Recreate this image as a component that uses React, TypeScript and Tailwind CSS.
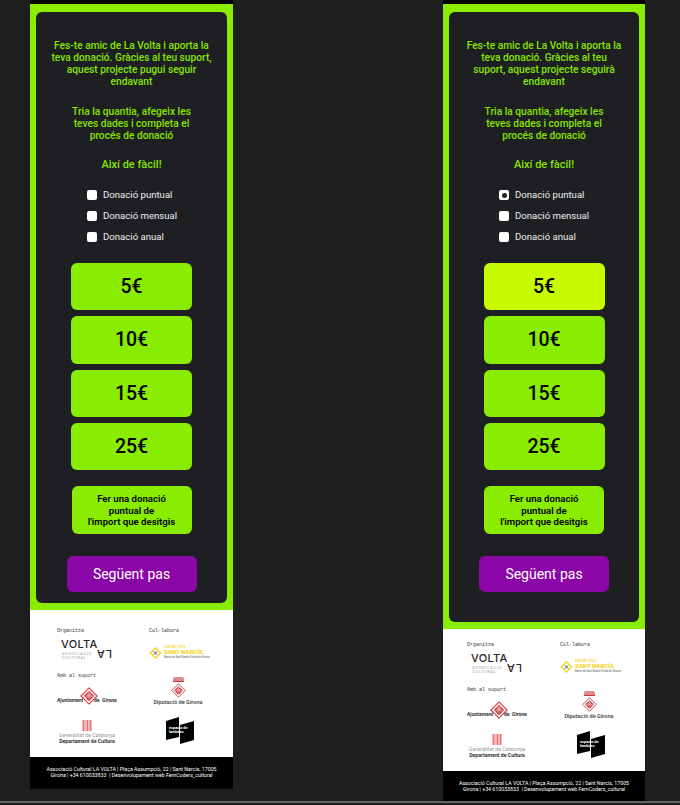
const Shield = ({ className = "" }: { className?: string }) => (
  <svg viewBox="0 0 20 20" className={className}>
    <path d="M10 1 19 10 10 19 1 10Z" fill="#fff" stroke="#c8363c" strokeWidth="1.2" />
    <path d="M10 4 16 10 10 16 4 10Z" fill="#c8363c" />
    <path d="M7 7 13 13M13 7 7 13M10 4V16M4 10H16M7.5 5 15 12.5M12.5 5 5 12.5" stroke="#f5c9c9" strokeWidth=".7" />
  </svg>
);

const VoltaLogo = () => (
  <div className="relative h-[20px] w-[50px]">
    <span className="absolute -top-[0.5px] left-0 font-['Inter',sans-serif] text-[11px] leading-[10px] font-medium tracking-[0.3px] text-[#2a2327]">VOLTA</span>
    <span className="absolute top-[12.5px] left-[1px] text-[4.2px] leading-[4px] tracking-[0.6px] whitespace-nowrap text-[#a29c9e]">
      ASSOCIACIÓ
      <br />
      CULTURAL
    </span>
    <span className="absolute top-[10px] left-[35px] rotate-180 font-['Inter',sans-serif] text-[11px] leading-[9px] font-medium tracking-[1px] text-[#2a2327]">LA</span>
  </div>
);

const NarcisLogo = () => (
  <div className="flex w-[62px] items-center gap-[2px]">
    <svg viewBox="0 0 14 14" className="h-[12px] w-[13px] shrink-0">
      <path d="M7 1 13 7 7 13 1 7Z" fill="none" stroke="#f7d42a" strokeWidth="1.6" />
      <path d="M5 5 9 9M9 5 5 9" stroke="#3b3524" strokeWidth="1" />
    </svg>
    <div className="flex flex-col">
      <span className="text-[2.8px] leading-[3px] font-bold tracking-[0.3px] text-[#f7d42a]">CENTRE CÍVIC</span>
      <span className="text-[6px] leading-[6px] font-black text-[#f7d42a]">SANT NARCÍS</span>
      <span className="mt-[1px] text-[2.7px] leading-[3px] font-medium whitespace-nowrap text-[#777]">Barris de Sant Narcís Fitzbó de Girona</span>
    </div>
  </div>
);

const AjuntamentLogo = () => (
  <div className="relative h-[18px] w-[60px]">
    <Shield className="absolute top-0 left-[23px] h-[18px] w-[18px]" />
    <span className="absolute top-[10px] left-0 text-[5px] leading-[6px] font-bold text-[#333]">Ajuntament</span>
    <span className="absolute top-[10px] left-[37px] text-[5px] leading-[6px] font-bold text-[#333]">de</span>
    <span className="absolute top-[10px] left-[45px] text-[5px] leading-[6px] font-bold text-[#333]">Girona</span>
  </div>
);

const DiputacioLogo = () => (
  <div className="flex w-[52px] flex-col items-center">
    <div className="h-[5px] w-[11px] rounded-t-[2px] border-b border-[#c8363c] bg-[#d98d8d]" />
    <Shield className="mt-[1px] h-[15px] w-[15px]" />
    <span className="mt-[1px] text-[5.6px] leading-[6px] font-semibold whitespace-nowrap text-[#4a4a4a]">Diputació de Girona</span>
  </div>
);

const GeneralitatLogo = () => (
  <div className="flex w-[60px] flex-col items-center pt-[2px]">
    <div className="flex h-[11px] w-[10px] justify-between bg-[#f7b7b7] px-[1px]">
      <i className="w-[1px] bg-[#ef6f72]" />
      <i className="w-[1px] bg-[#ef6f72]" />
      <i className="w-[1px] bg-[#ef6f72]" />
    </div>
    <span className="mt-[1px] text-[5.2px] leading-[6px] whitespace-nowrap text-[#999]">Generalitat de Catalunya</span>
    <span className="text-[5.2px] leading-[6px] font-bold whitespace-nowrap text-[#333]">Departament de Cultura</span>
  </div>
);

const BookLogo = () => (
  <div className="relative h-[27px] w-[28px]">
    <svg viewBox="0 0 28 27" className="h-full w-full">
      <path d="M0 4 13 0V20L0 23Z" fill="#000" />
      <path d="M14 8 28 4V23L14 27Z" fill="#000" />
    </svg>
    <span className="absolute top-[9px] left-[3px] text-[3.8px] leading-[4px] font-bold whitespace-nowrap text-white">
      espacio de
      <br />
      lambdas
    </span>
  </div>
);

type PanelProps = {
  width: string;
  cardH: string;
  footerPad: string;
  gridCols: string;
  selected: boolean;
  ml: string;
  radioPl: string;
  intro: string[];
};

const Panel = ({ width, cardH, footerPad, gridCols, selected, ml, radioPl, intro }: PanelProps) => (
  <div className={`flex shrink-0 flex-col ${width} ${ml}`}>
    <div className="h-[4px] bg-black" />
    <div className="flex flex-col bg-[#8aec00] px-[6px] pt-[8px] pb-[7px]">
      <div className={`flex flex-col items-center rounded-[6px] bg-[#1e1f22] pt-[28px] ${cardH}`}>
        <p className="text-center text-[10.2px] leading-[12px] font-medium whitespace-nowrap text-[#85e400]">
          {intro.map((l) => (
            <span key={l} className="block">{l}</span>
          ))}
        </p>
        <p className="mt-[18px] text-center text-[10.2px] leading-[12px] font-medium text-[#85e400]">
          Tria la quantia, afegeix les
          <br />
          teves dades i completa el
          <br />
          procés de donació
        </p>
        <p className="mt-[17px] text-[11px] leading-[12px] font-medium text-[#85e400]">Així de fàcil!</p>
        <div className={`mt-[19px] flex w-full flex-col gap-[11px] ${radioPl}`}>
          {["Donació puntual", "Donació mensual", "Donació anual"].map((t, i) => (
            <div key={t} className="flex h-[10px] items-center gap-[6px]">
              <span className="flex h-[10px] w-[10px] items-center justify-center rounded-[2px] bg-white">
                {selected && i === 0 && <span className="h-[5px] w-[5px] rounded-full bg-[#222]" />}
              </span>
              <span className="text-[9.6px] leading-[12px] text-[#eee]">{t}</span>
            </div>
          ))}
        </div>
        <div className="mt-[21px] flex w-[121px] flex-col gap-[6px]">
          {["5€", "10€", "15€", "25€"].map((t, i) => (
            <button
              key={t}
              className={`h-[47.33px] rounded-[6px] text-[19.5px] font-medium text-black ${selected && i === 0 ? "bg-[#c8fa00]" : "bg-[#8aec00]"}`}
            >
              {t}
            </button>
          ))}
        </div>
        <button className="mt-[16px] h-[48px] w-[120px] rounded-[6px] bg-[#8aec00] text-[9.6px] leading-[11.5px] font-semibold text-black">
          Fer una donació
          <br />
          puntual de
          <br />
          l'import que desitgis
        </button>
        <button className="mt-[22px] h-[36px] w-[130px] rounded-[6px] bg-[#8a06a6] text-[14px] text-white">Següent pas</button>
      </div>
    </div>
    <div className={`flex flex-col bg-white ${footerPad}`}>
      <div className={`grid ${gridCols}`}>
        <div className="h-[45px]">
          <p className="font-['Liberation_Mono',monospace] text-[5px] leading-[6px] text-[#333]">Organitza</p>
          <div className="mt-[5px] ml-[4px]"><VoltaLogo /></div>
        </div>
        <div className="h-[45px]">
          <p className="font-['Liberation_Mono',monospace] text-[5px] leading-[6px] text-[#333]">Col·labora</p>
          <div className="mt-[12px]"><NarcisLogo /></div>
        </div>
        <div className="h-[45px]">
          <p className="font-['Liberation_Mono',monospace] text-[5px] leading-[6px] text-[#333]">Amb al suport</p>
          <div className="mt-[8px]"><AjuntamentLogo /></div>
        </div>
        <div className="h-[45px] pl-[3px]"><div className="mt-[4px]"><DiputacioLogo /></div></div>
        <div className="h-[39px]"><GeneralitatLogo /></div>
        <div className="h-[39px] pl-[17px]"><div className="-mt-[1px]"><BookLogo /></div></div>
      </div>
    </div>
    <div className="flex h-[32px] flex-col items-center bg-black pt-[9px] text-[5.25px] leading-[6px] whitespace-nowrap text-white">
      <span>Associació Cultural LA VOLTA | Plaça Assumpció, 22 | Sant Narcís, 17005</span>
      <span>Girona | +34 610033833 &nbsp;| Desenvolupament web FemCoders_cultural</span>
    </div>
  </div>
);

export default function App() {
  return (
    <div className="flex h-[805px] w-[680px] flex-col overflow-hidden bg-[#1e1e1e] font-['Roboto',sans-serif]">
      <div className="flex h-[801px] items-start overflow-hidden">
        <Panel
          width="w-[203px]"
          ml="ml-[30px]"
          cardH="h-[591px]"
          footerPad="pt-[18px] pl-[27px]"
          gridCols="grid-cols-[92px_1fr]"
          radioPl="pl-[51px]"
          selected={false}
          intro={["Fes-te amic de La Volta i aporta la", "teva donació. Gràcies al teu suport,", "aquest projecte pugui seguir", "endavant"]}
        />
        <Panel
          width="w-[202px]"
          ml="ml-[210px]"
          cardH="h-[610px]"
          footerPad="pt-[13px] pl-[24px]"
          gridCols="grid-cols-[93px_1fr]"
          radioPl="pl-[50px]"
          selected
          intro={["Fes-te amic de La Volta i aporta la", "teva donació. Gràcies al teu", "suport, aquest projecte seguirà", "endavant"]}
        />
      </div>
      <div className="h-[2px] bg-[#666]" />
    </div>
  );
}
